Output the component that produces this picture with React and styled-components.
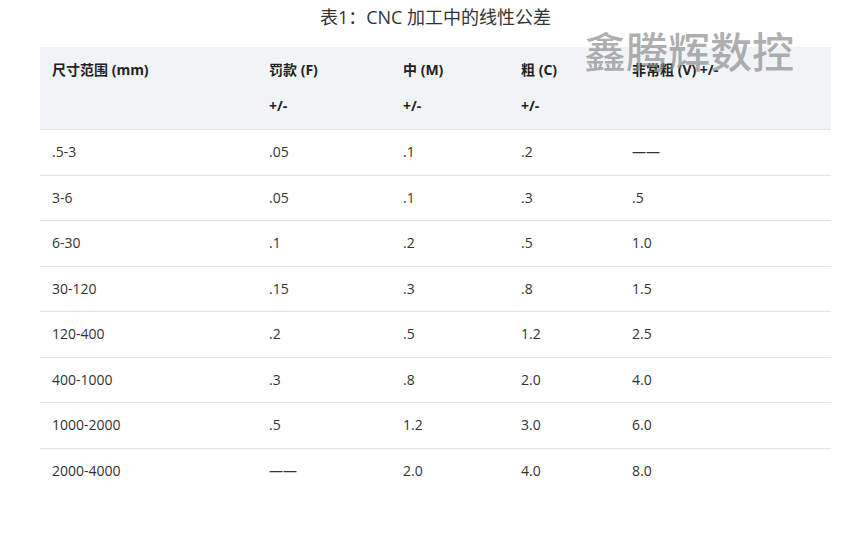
import React from 'react';
import styled, { createGlobalStyle } from 'styled-components';

const GlobalStyle = createGlobalStyle`
  html, body {
    margin: 0;
    padding: 0;
    background: #ffffff;
  }
  body {
    font-family: 'Open Sans', 'Noto Sans CJK SC', sans-serif;
    color: #333333;
  }
`;

const Page = styled.div`
  position: relative;
  width: 852px;
  height: 536px;
  padding: 0 21px 0 40px;
  box-sizing: border-box;
`;

const Caption = styled.div`
  text-align: center;
  font-size: 18px;
  line-height: 34px;
  height: 47px;
  color: #333333;
`;

const Watermark = styled.div`
  position: absolute;
  left: 584px;
  top: 24px;
  font-family: 'Noto Sans CJK SC', sans-serif;
  font-size: 42px;
  font-weight: 500;
  line-height: 52px;
  color: rgba(140, 140, 140, 0.7);
  pointer-events: none;
  white-space: nowrap;
`;

const Table = styled.table`
  width: 791px;
  border-collapse: collapse;
  table-layout: fixed;
  font-size: 14px;
`;

const HeadRow = styled.tr`
  background: #f1f4f7;
  border-bottom: 1px solid #e1e5ea;
`;

const HeadCell = styled.th`
  text-align: left;
  vertical-align: top;
  font-weight: 700;
  padding: 5px 12px 5px;
  line-height: 36px;
  color: #222222;
  white-space: nowrap;
`;

const Row = styled.tr`
  border-bottom: ${({ $last }) => ($last ? 'none' : '1px solid #e1e5ea')};
`;

const Cell = styled.td`
  padding: 0 12px;
  height: 44.5px;
  line-height: 22px;
  color: #333333;
  white-space: nowrap;
`;

const columns = [
  { title: '尺寸范围 (mm)', sub: '', width: 217 },
  { title: '罚款 (F)', sub: '+/-', width: 134 },
  { title: '中 (M)', sub: '+/-', width: 118 },
  { title: '粗 (C)', sub: '+/-', width: 111 },
  { title: '非常粗 (V) +/-', sub: '', width: 211 },
];

const rows = [
  ['.5-3', '.05', '.1', '.2', '——'],
  ['3-6', '.05', '.1', '.3', '.5'],
  ['6-30', '.1', '.2', '.5', '1.0'],
  ['30-120', '.15', '.3', '.8', '1.5'],
  ['120-400', '.2', '.5', '1.2', '2.5'],
  ['400-1000', '.3', '.8', '2.0', '4.0'],
  ['1000-2000', '.5', '1.2', '3.0', '6.0'],
  ['2000-4000', '——', '2.0', '4.0', '8.0'],
];

const App = () => (
  <>
    <GlobalStyle />
    <Page>
      <Caption>表1：CNC 加工中的线性公差</Caption>
      <Table>
        <colgroup>
          {columns.map((c) => (
            <col key={c.title} style={{ width: c.width }} />
          ))}
        </colgroup>
        <thead>
          <HeadRow>
            {columns.map((c) => (
              <HeadCell key={c.title}>
                {c.title}
                <br />
                {c.sub || '\u00a0'}
              </HeadCell>
            ))}
          </HeadRow>
        </thead>
        <tbody>
          {rows.map((r, i) => (
            <Row key={r[0]} $last={i === rows.length - 1}>
              {r.map((v, j) => (
                <Cell key={j}>{v}</Cell>
              ))}
            </Row>
          ))}
        </tbody>
      </Table>
      <Watermark>鑫腾辉数控</Watermark>
    </Page>
  </>
);

export default App;
